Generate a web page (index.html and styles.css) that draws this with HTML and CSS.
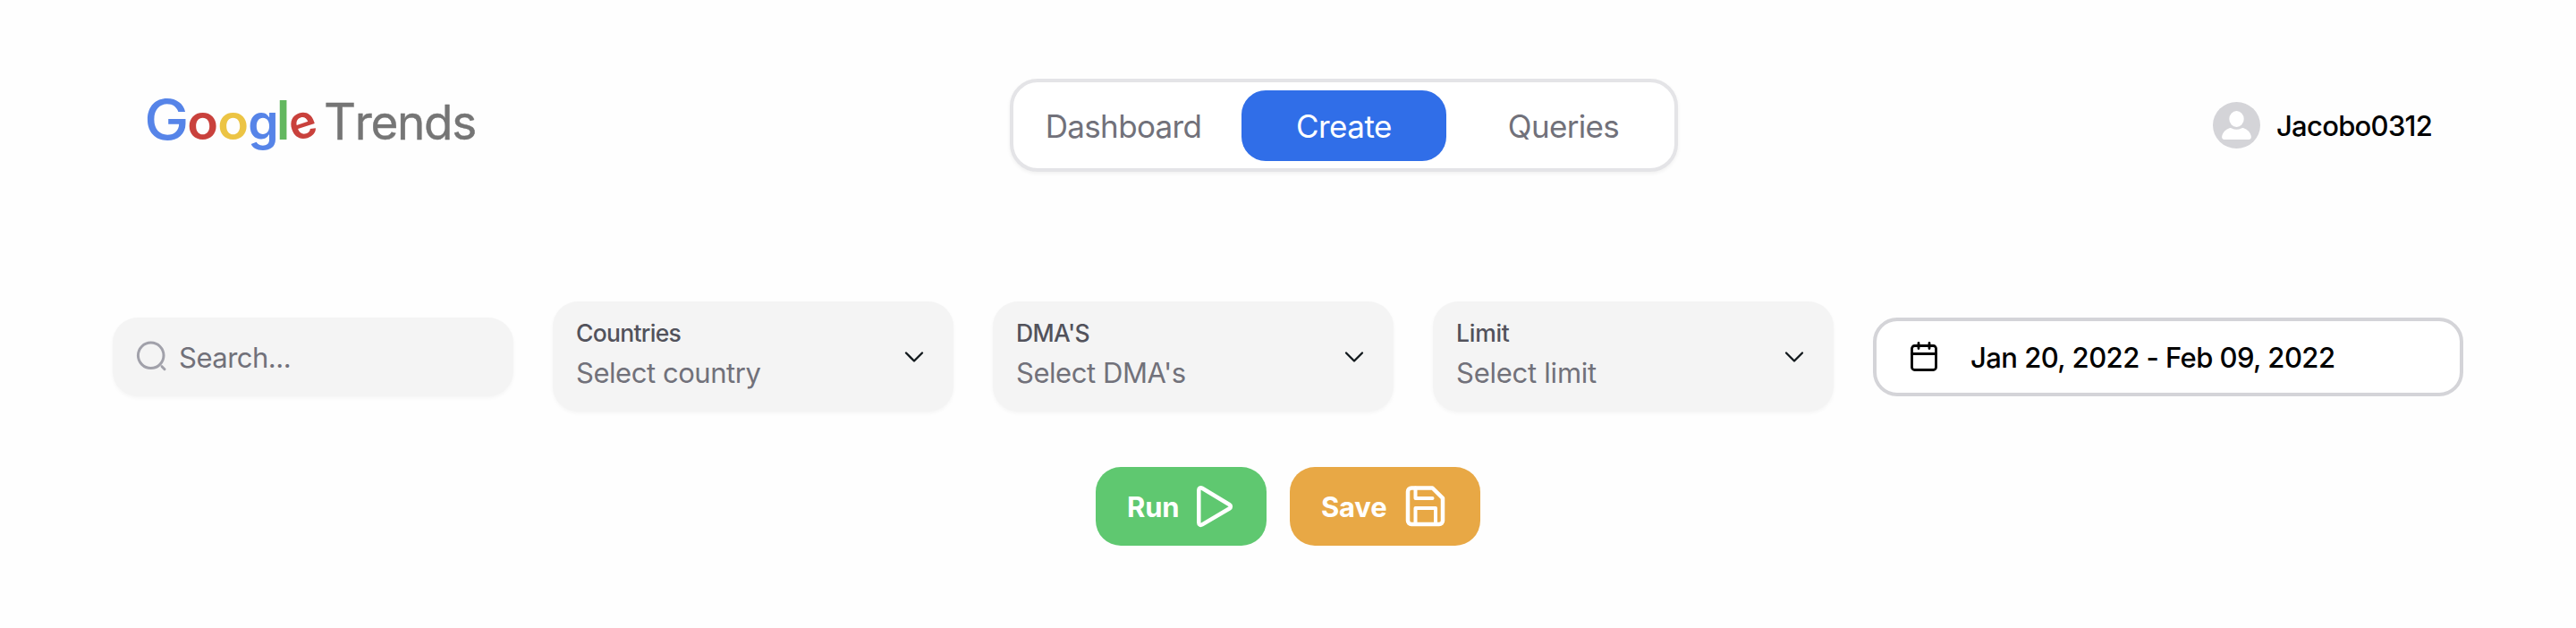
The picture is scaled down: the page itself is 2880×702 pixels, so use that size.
FILE: index.html
```html
<!DOCTYPE html>
<html lang="en">
<head>
<meta charset="utf-8">
<title>Google Trends</title>
<link rel="stylesheet" href="styles.css">
</head>
<body>
<header class="header">
  <a class="logo">
    <span class="google"><span class="big-g">G</span><span class="red">o</span><span class="yellow">o</span><span class="small-g">g</span><span class="ell">l</span><span class="red tilt">e</span></span>
    <span class="trends"><span class="cap">T</span>rends</span>
  </a>
  <nav class="tabs">
    <a class="tab first">Dashboard</a>
    <a class="tab active">Create</a>
    <a class="tab last">Queries</a>
  </nav>
  <div class="user">
    <svg class="avatar" viewBox="0 0 53 52"><ellipse cx="26.5" cy="26" rx="26.5" ry="26" fill="#d4d4d8"/><ellipse cx="26.5" cy="19" rx="8.2" ry="9" fill="#fff"/><path d="M18.5 29.3c1-.5 2-.3 2.700.2 3.300 1.800 7.300 1.800 10.600 0 .7-.5 1.700-.7 2.700-.2 4.500 1.800 7.500 4.700 8.300 8.700.5 2.500-.8 4-2.800 4h-27c-2 0-3.300-1.500-2.800-4 .8-4 3.800-6.900 8.300-8.700z" fill="#fff"/></svg>
    <span class="username">Jacobo0312</span>
  </div>
</header>
<section class="filters">
  <div class="search">
    <svg class="search-icon" viewBox="0 0 36 36" fill="none" stroke="#a1a1aa" stroke-width="3" stroke-linecap="round"><circle cx="16.700" cy="16.300" r="14.300"/><path d="M29 28.700l3 3"/></svg>
    <span class="placeholder">Search...</span>
  </div>
  <div class="select">
    <div><div class="label">Countries</div><div class="value">Select country</div></div>
    <svg class="chevron" viewBox="0 0 24 16"><path d="M3 3.500l9 9 9-9"/></svg>
  </div>
  <div class="select">
    <div><div class="label">DMA'S</div><div class="value">Select DMA's</div></div>
    <svg class="chevron" viewBox="0 0 24 16"><path d="M3 3.500l9 9 9-9"/></svg>
  </div>
  <div class="select">
    <div><div class="label wide">Limit</div><div class="value wide">Select limit</div></div>
    <svg class="chevron" viewBox="0 0 24 16"><path d="M3 3.500l9 9 9-9"/></svg>
  </div>
  <div class="date">
    <svg class="calendar" viewBox="0 0 30 34" fill="none" stroke="#000" stroke-width="2.800" stroke-linecap="round" stroke-linejoin="round"><rect x="1.500" y="4.500" width="27" height="27" rx="3"/><path d="M9 1.500v6M21 1.500v6M1.500 13.500h27"/></svg>
    <span class="range">Jan 20, 2022 - Feb 09, 2022</span>
  </div>
</section>
<div class="actions">
  <button class="btn run"><span class="btn-text">Run</span>
    <svg class="play" viewBox="0 0 40 46" fill="none" stroke="#fff" stroke-width="4.500" stroke-linejoin="round"><path d="M2.300 4.800v36.400c0 2.300 1.800 3.300 3.800 2.200l30.300-17.900c2-1.200 2-3.300 0-4.500L6.100 2.700c-2-1.200-3.800-.2-3.800 2.100z"/></svg>
  </button>
  <button class="btn save"><span class="btn-text">Save</span>
    <svg class="floppy" viewBox="0 0 46 46" fill="none" stroke="#fff" stroke-width="4.500" stroke-linecap="round" stroke-linejoin="round"><path d="M7 2.500h23.500L42 13.800V39a4 4 0 0 1-4 4H7a4 4 0 0 1-4-4V6.500a4 4 0 0 1 4-4z"/><path d="M11.500 43V25H34v18M11.500 2.500V14h19" stroke-width="4"/></svg>
  </button>
</div>
</body>
</html>
```
FILE: styles.css
```css
* { box-sizing: border-box; }
body {
  margin: 0;
  height: 702px;
  background: #fefefe;
  font-family: Inter, "Liberation Sans", sans-serif;
  display: flex;
  flex-direction: column;
  overflow: hidden;
}
svg { display: block; flex: none; overflow: visible; }
.header {
  display: grid;
  grid-template-columns: 967px 747px 1fr;
  padding: 88px 160px 0 162px;
  height: 192px;
  align-items: center;
}
.logo { display: flex; align-items: baseline; height: 104px; line-height: 88px; padding-top: 2px; white-space: nowrap; }
.google {
  display: grid;
  grid-template-columns: 48px 34px 34px 33px 11px 30px;
  align-items: baseline;
  justify-items: center;
  font-size: 55px;
  font-weight: 600;
}
.google span { display: block; }
.big-g { font-size: 62px; font-weight: 550; color: #5684e8; transform: scaleX(1.08); }
.red { color: #c9413c; }
.yellow { color: #ecc444; }
.red, .yellow { transform: scaleX(1.04); }
.small-g { color: #5684e8; }
.ell { color: #63b75f; font-size: 60px; font-weight: 600; }
.red.tilt { transform: rotate(-18deg) scale(.94); }
.trends { margin-left: 10px; font-size: 53px; font-weight: 400; color: #757575; letter-spacing: -1.35px; -webkit-text-stroke: .4px #757575; }
.cap { font-size: 56px; }
.tabs {
  display: grid;
  grid-template-columns: 246px 229px 1fr;
  height: 104px;
  padding: 9px;
  border: 4px solid #e4e4e7;
  border-radius: 31px;
  background: #fff;
  box-shadow: 0 2px 4px rgba(0,0,0,.06);
  align-items: center;
}
.tab { font-size: 35px; line-height: 80px; height: 79px; letter-spacing: -.65px; color: #71717a; text-align: center; }
.first { padding-right: 18px; }
.last { padding-left: 16px; }
.active { background: #306ee8; color: #fff; border-radius: 27px; letter-spacing: -.5px; }
.user { display: flex; align-items: center; justify-content: flex-end; gap: 18px; }
.avatar { width: 53px; height: 52px; }
.username { font-size: 31px; font-weight: 450; line-height: 40px; letter-spacing: -.72px; color: #000; width: 175px; white-space: nowrap; padding-top: 1px; }
.filters {
  display: grid;
  grid-template-columns: repeat(4, 448px) 660px;
  gap: 44px;
  margin: 145px 126px 0;
  align-items: center;
}
.search, .select { background: #f4f4f4; border-radius: 28px; box-shadow: 0 2px 4px rgba(0,0,0,.04); }
.search { height: 88px; display: flex; align-items: center; padding-left: 26px; gap: 12px; }
.search-icon { width: 36px; height: 36px; }
.placeholder { font-size: 31px; letter-spacing: -.5px; padding-top: 1px; color: #71717a; }
.select { height: 123px; display: flex; justify-content: space-between; padding: 15px 32px 0 26px; }
.label { font-size: 26.500px; font-weight: 450; line-height: 41px; letter-spacing: -.7px; color: #52525b; }
.value { font-size: 31px; line-height: 48px; letter-spacing: -.45px; color: #71717a; }
.label.wide, .value.wide { letter-spacing: -.25px; }
.chevron { width: 24px; height: 16px; margin-top: 39px; fill: none; stroke: #11181c; stroke-width: 2.300; stroke-linecap: round; stroke-linejoin: round; }
.date { height: 88px; border: 4px solid #d4d4d8; border-radius: 27px; background: #fff; display: flex; align-items: center; padding-left: 38px; gap: 37px; }
.calendar { width: 30px; height: 34px; }
.range { font-size: 31px; font-weight: 450; letter-spacing: -.55px; padding-top: 1px; color: #000; white-space: nowrap; }
.actions { display: flex; justify-content: center; gap: 26px; margin-top: 62px; }
.btn { height: 88px; border: 0; border-radius: 28px; padding: 0 0 0 35px; display: flex; align-items: center; color: #fff; font: 700 31px Inter, sans-serif; letter-spacing: -.2px; }
.run { width: 191px; background: #5fc870; }
.save { width: 213px; background: #e8a845; }
.run .btn-text { width: 78px; text-align: left; }
.save .btn-text { width: 94px; text-align: left; }
.play { width: 40px; height: 46px; }
.floppy { width: 46px; height: 46px; }
```
